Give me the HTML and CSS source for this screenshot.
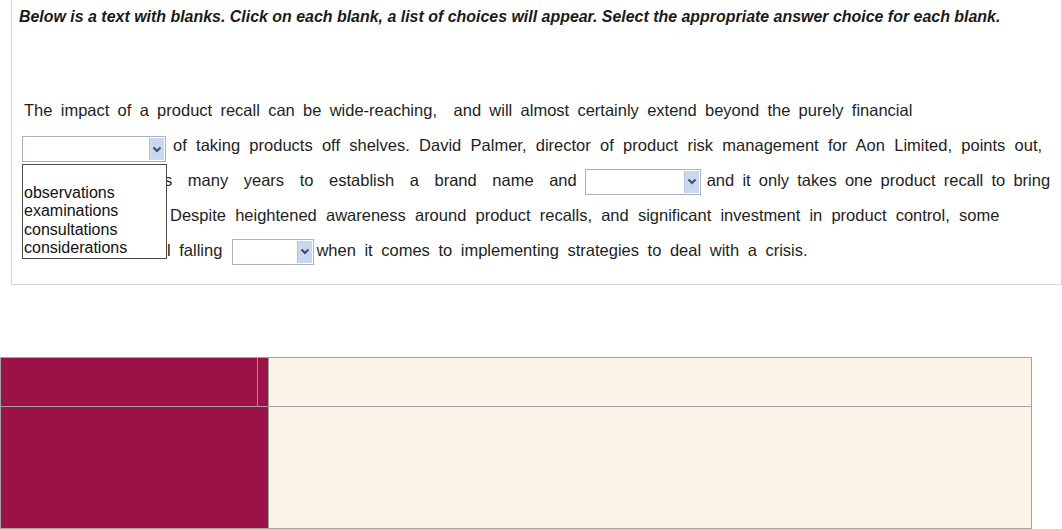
FILE: index.html
```html
<!DOCTYPE html>
<html lang="en">
    <head>
        <meta charset="UTF-8">
        <meta name="viewport" content="width=device-width, initial-scale=1.0">
        <title>Fill in the blanks</title>
        <link rel="stylesheet" href="styles.css">
    </head>
    <body>
        <div class="question">
            <p class="instructions">Below is a text with blanks. Click on each blank, a list of choices will appear. Select the appropriate answer choice for each blank.</p>
            <div class="passage">
                <div class="line line-1">The impact of a product recall can be wide-reaching,&nbsp; and will almost certainly extend beyond the purely financial</div>
                <div class="line line-2">
                    <span class="blank blank-wide"><span class="arrow"><svg width="10" height="7" viewBox="0 0 10 7"><path d="M1.5 1.5 L5 5 L8.5 1.5" fill="none" stroke="#3b4f73" stroke-width="2"/></svg></span></span>
                    <span class="after">of taking products off shelves. David Palmer, director of product risk management for Aon Limited, points out,</span>
                    <ul class="choices">
                        <li>&nbsp;</li>
                        <li>observations</li>
                        <li>examinations</li>
                        <li>consultations</li>
                        <li>considerations</li>
                    </ul>
                </div>
                <div class="line line-3"><span class="spacer s3"></span><span class="wide">s many years to establish a brand name and</span><span class="blank blank-mid"><span class="arrow"><svg width="10" height="7" viewBox="0 0 10 7"><path d="M1.5 1.5 L5 5 L8.5 1.5" fill="none" stroke="#3b4f73" stroke-width="2"/></svg></span></span><span class="tight">and it only takes one product recall to bring</span></div>
                <div class="line line-4"><span class="spacer s4"></span>Despite heightened awareness around product recalls, and significant investment in product control, some</div>
                <div class="line line-5"><span class="spacer s5"></span>l falling<span class="blank blank-short"><span class="arrow"><svg width="10" height="7" viewBox="0 0 10 7"><path d="M1.5 1.5 L5 5 L8.5 1.5" fill="none" stroke="#3b4f73" stroke-width="2"/></svg></span></span>when it comes to implementing strategies to deal with a crisis.</div>
            </div>
        </div>

        <table class="answers">
            <tr class="row-top">
                <td class="label"><span class="seam"></span></td>
                <td class="value"></td>
            </tr>
            <tr class="row-bottom">
                <td class="label"></td>
                <td class="value"></td>
            </tr>
        </table>
    </body>
</html>
```

FILE: styles.css
```css
* {
    box-sizing: border-box;
}

body {
    margin: 0;
    background-color: white;
    font-family: "Liberation Sans", Arial, sans-serif;
    color: #1e1e1e;
}

.question {
    margin-left: 11px;
    height: 285px;
    border: 1px solid #d6d6d6;
    border-top: none;
    padding: 8px 0 0 7px;
}

.instructions {
    margin: 0;
    font-size: 15.95px;
    line-height: 18px;
    font-weight: bold;
    font-style: italic;
    color: #1a1a1a;
}

.passage {
    margin-top: 67px;
    margin-left: 5px;
    font-size: 16.5px;
}

.line {
    height: 35px;
    line-height: 35px;
    white-space: nowrap;
    position: relative;
}

.line-1 {
    word-spacing: 3.7px;
}

.line-2 {
    display: flex;
    align-items: flex-start;
    margin-left: -2px;
    word-spacing: 4.7px;
}

.line-2 .blank {
    margin-top: 8px;
}

.line-2 .after {
    margin-left: 7px;
}

.line-3 .wide {
    word-spacing: 11px;
}

.line-3 .tight {
    word-spacing: 3.6px;
}

.line-4 {
    word-spacing: 4.6px;
}

.line-5 {
    word-spacing: 4px;
}

.spacer {
    display: inline-block;
    vertical-align: top;
    height: 35px;
}

.s3 {
    width: 140px;
}

.s4 {
    width: 146px;
}

.s5 {
    width: 143px;
}

.blank {
    display: inline-flex;
    justify-content: flex-end;
    align-items: stretch;
    height: 26px;
    vertical-align: middle;
    background: white;
    border: 1px solid #a9b2bf;
    padding: 1px;
}

.blank-wide {
    width: 144px;
    flex-shrink: 0;
}

.blank-mid {
    width: 116px;
    margin: 0 6px 0 8px;
}

.blank-short {
    width: 82px;
    margin: 0 2px 0 10px;
}

.arrow {
    width: 15px;
    display: flex;
    align-items: center;
    justify-content: center;
    background: #c9d7ef;
    border-left: 1px solid #b3c3e0;
}

.choices {
    position: absolute;
    left: 0;
    top: 36px;
    z-index: 2;
    width: 145px;
    margin: 0;
    padding: 0 0 0 1px;
    list-style: none;
    background: white;
    border: 1px solid #4a4a4a;
    font-size: 16px;
    line-height: 18.5px;
    color: #111;
    word-spacing: normal;
}

.answers {
    margin-top: 72px;
    width: 1032px;
    border-collapse: collapse;
}

.answers td {
    border: 1px solid #a3a3a3;
    padding: 0;
}

.row-top td {
    height: 49px;
}

.row-bottom td {
    height: 122px;
}

.label {
    width: 268px;
    background-color: #9b1346;
    position: relative;
}

.value {
    background-color: #fcf4e8;
}

.seam {
    position: absolute;
    left: 256px;
    top: 0;
    width: 1px;
    height: 98px;
    background-color: #d7689a;
}
```
